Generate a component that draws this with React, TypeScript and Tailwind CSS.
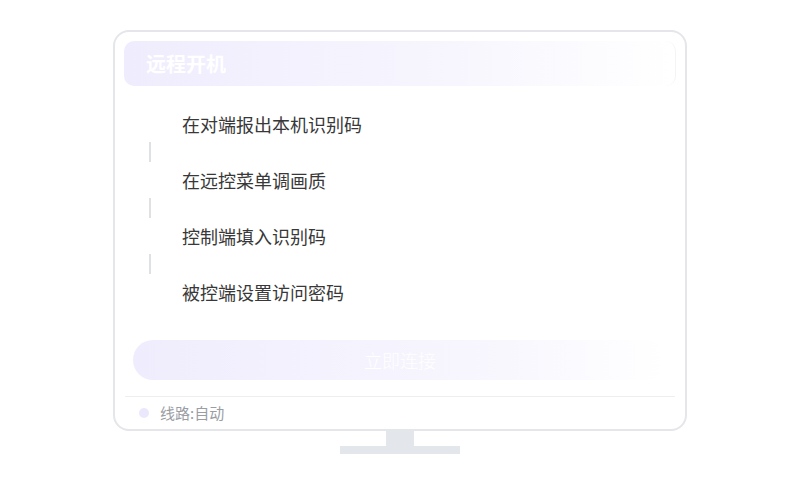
import React from "react";

const steps = ["在对端报出本机识别码", "在远控菜单调画质", "控制端填入识别码", "被控端设置访问密码"];

export default function App() {
  return (
    <div
      className="w-[800px] h-[500px] bg-white flex flex-col items-center pt-[30px]"
      style={{ fontFamily: '"Noto Sans CJK SC", "Noto Sans", sans-serif' }}
    >
      <div className="w-[574px] h-[401px] border-2 border-[#e4e6ea] rounded-[16px] px-[9px] pt-[9px] flex flex-col bg-white">
        <div className="h-[45px] rounded-[10px] bg-linear-to-r from-[#efedfd] via-[#f7f6fe] via-60% to-white flex items-center pl-[22px] border-r border-[#f4f4f6]">
          <span className="text-[20px] font-bold text-white leading-none">远程开机</span>
        </div>
        <div className="mt-[24px] flex flex-col">
          {steps.map((s, i) => (
            <React.Fragment key={s}>
              {i > 0 && (
                <div className="h-[28px] flex items-center pl-[25px]">
                  <div className="w-[2px] h-[20px] bg-[#dfe1e5]" />
                </div>
              )}
              <div className="h-[28px] flex items-center pl-[58px] text-[18px] text-[#383838]">{s}</div>
            </React.Fragment>
          ))}
        </div>
        <div className="mt-[34px] mx-auto w-[534px] h-[40px] rounded-full bg-linear-to-r from-[#efedfd] via-[#f8f7fe] via-70% to-white flex items-center justify-center text-[18px] font-light text-white">
          立即连接
        </div>
        <div className="mt-[16px] mx-[1px] h-px bg-[#eceef2]" />
        <div className="flex-1 flex items-center pl-[15px]">
          <div className="w-[10px] h-[10px] rounded-full bg-[#ebe8fd]" />
          <span className="ml-[11px] text-[15px] text-[#9a9da4]">线路:自动</span>
        </div>
      </div>
      <div className="w-[28px] h-[15px] bg-[#e3e6ea]" />
      <div className="w-[120px] h-[8px] bg-[#e3e6ea]" />
    </div>
  );
}
